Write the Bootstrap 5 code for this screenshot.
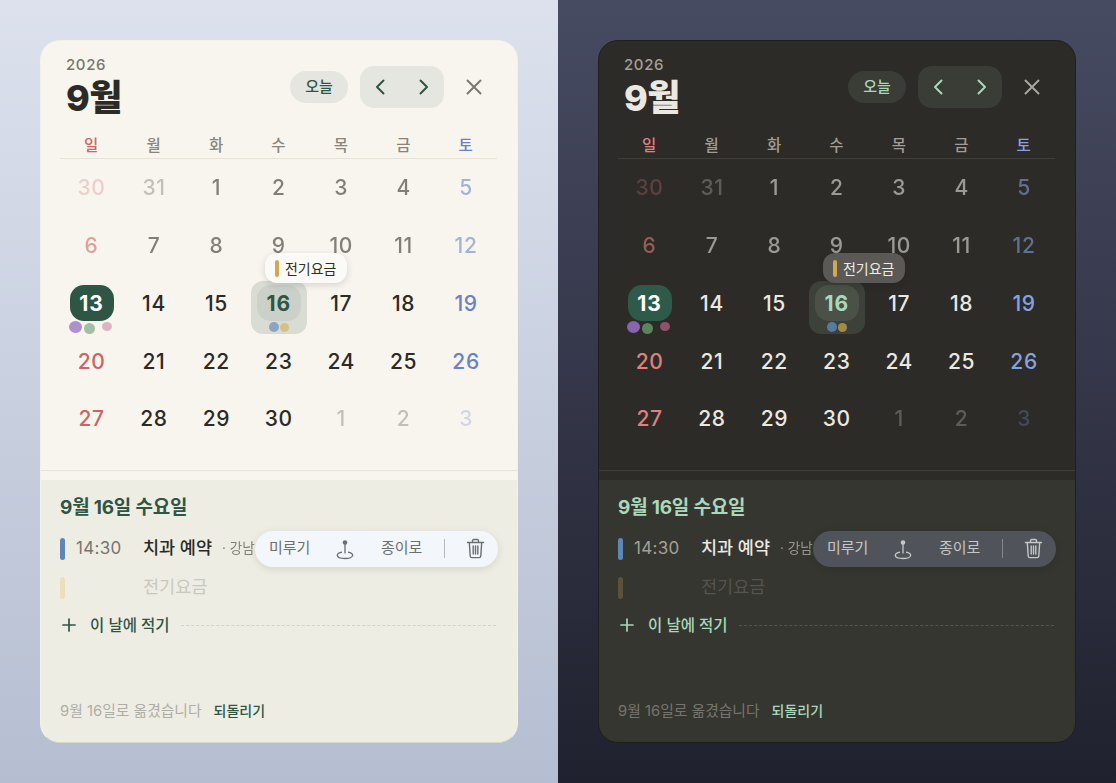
<!DOCTYPE html>
<html lang="ko"><head><meta charset="utf-8"><title>달력</title>
<link href="https://cdn.jsdelivr.net/npm/bootstrap@5.3.0/dist/css/bootstrap.min.css" rel="stylesheet">
<style>
html,body{height:783px;overflow:hidden;margin:0}
body{font-family:Inter,"Noto Sans CJK KR",sans-serif}
.stage{height:783px}
.pane{width:558px;height:783px;padding:40px;background:linear-gradient(180deg,var(--bg1),var(--bg2))}
.lt{--bg1:#dce1ed;--bg2:#b5bed1;--card:#f8f5ee;--low:#eeede4;--edge:#e6e2d8;--ink:#2b2a25;--acc:#2f5545;--mut:#77756c;--soft:#e5e6df;--sun:#cc6365;--sat:#6a80c8;--tip:#fbfaf6;--tipink:#2e2d28;--chip:#2f5545;--sel1:#d8dcd3;--sel2:#cbd1c8;--pill:#f3f6fa;--pilltx:#6c6f70;--ghost:#c9c8c0;--wd:#88857c;--foot:#aeaea6;--cx:#7a7870;--bar2:#ecdfbc;--dash:#d3d3c9;--rim:#f4f1e8;--rimb:#d9d6c6;--d1:#a98ccb;--d2:#9fbc9f;--d3:#deb0bf;--d4:#86a2c4;--d5:#d6bf80}
.dk{--bg1:#474b62;--bg2:#20212e;--card:#2c2b27;--low:#363630;--edge:#3f3e38;--ink:#ebe8e1;--acc:#a9d8ba;--mut:#a3a197;--soft:#3a3c36;--sun:#e0817e;--sat:#86a3e0;--tip:#5a5955;--tipink:#efece5;--chip:#2f5a4a;--sel1:#3c413a;--sel2:#4a5248;--pill:#50545a;--pilltx:#c5c7c7;--ghost:#55544e;--wd:#a09e95;--foot:#76756d;--cx:#a9a79e;--bar2:#5c5238;--dash:#55554d;--rim:#1f1f1d;--rimb:#1f1f1d;--d1:#8d69b7;--d2:#5d8a5f;--d3:#94566e;--d4:#587fa9;--d5:#a98f45}
.sheet{width:478px;height:703px;background:var(--card);border:1px solid var(--rim);border-bottom-color:var(--rimb);border-radius:20px;overflow:hidden;color:var(--ink)}
.head{flex:none;height:93px;padding:14px 33px 0 25px}
.yr{font-size:15px;line-height:20px;letter-spacing:.6px;color:var(--mut);font-weight:500}
.mo{font-size:36px;line-height:44px;font-weight:800;letter-spacing:-.5px;margin-top:1px}
.ctl{padding-top:11px}
.todaybtn{width:58px;height:32px;background:var(--soft);border:0;border-radius:16px;color:var(--acc);font-size:15px;font-weight:500;padding:0;margin-right:12px}
.navgrp{width:84px;height:42px;background:var(--soft);border-radius:14px;margin-right:20px;padding:0 14px}
.navgrp svg{width:12px;height:18px;color:var(--acc)}
.closeic{width:20px;height:20px;color:var(--cx)}
.wrap{flex:none;padding:0 20px 0 19px}
.wdrow{height:25px;border-bottom:1px solid var(--edge);font-size:15.500px;line-height:19px;padding-top:2px;color:var(--wd);font-weight:500;text-align:center}
.wk{height:57.8px}
.dcell{position:relative;display:flex;align-items:center;justify-content:center;height:57.8px;font-size:21px;font-weight:500;color:var(--ink);letter-spacing:.6px;padding-left:.6px}
.tsun{color:var(--sun)}.tsat{color:var(--sat)}
.tpast{opacity:.58}.tout{opacity:.26}
.chip{position:relative;z-index:1;width:44px;height:36px;border-radius:14px;display:flex;align-items:center;justify-content:center;font-weight:700;color:#fff;background:var(--chip);letter-spacing:1px}
.selbox{position:absolute;left:4px;top:6.400px;width:56px;height:53px;border-radius:12px;background:var(--sel1)}
.selin{position:relative;z-index:1;width:44px;height:36px;border-radius:14px;display:flex;align-items:center;justify-content:center;font-weight:700;color:var(--acc);background:var(--sel2);letter-spacing:1px}
.pt{position:absolute;border-radius:50%;z-index:2;filter:blur(.6px);opacity:.95}
.tip{position:absolute;z-index:3;left:17.700px;top:-21.600px;width:82px;height:30px;border-radius:12px;background:var(--tip);box-shadow:0 2px 7px rgba(0,0,0,.14);display:flex;align-items:center;gap:6px;padding-left:10px;font-size:14px;font-weight:400;color:var(--tipink);letter-spacing:0;white-space:nowrap}
.tip i{display:block;width:4px;height:17px;border-radius:2px;background:#cfa94f}
.rule{flex:none;height:1px;background:var(--edge);margin-top:22px}
.lower{flex:none;background:var(--low);margin-top:9px;height:262px;padding:16px 21px 0 19px;position:relative}
.dtitle{font-size:19px;line-height:24px;font-weight:700;color:var(--acc);letter-spacing:-.2px;margin-bottom:9.500px}
.evt{height:39px;position:relative;white-space:nowrap}
.ebar{width:5px;height:22px;border-radius:2.5px;flex:none}
.etime{width:67px;margin-left:11px;font-size:17px;color:var(--mut);letter-spacing:.3px;flex:none;margin-top:-1px}
.ename{font-size:17.500px;font-weight:500;margin-top:-1px}
.esub{font-size:13.500px;color:var(--mut);margin-left:10px;opacity:.9;margin-top:-1px}
.gh{color:var(--ghost);font-weight:400;margin-left:78px}
.act{position:absolute;z-index:3;left:195px;top:1.500px;width:243px;height:36px;border-radius:18px;background:var(--pill);box-shadow:0 2px 8px rgba(0,0,0,.1);color:var(--pilltx);font-size:15px}
.act span{position:absolute;top:7px;line-height:20px}
.act svg{position:absolute}
.act b{position:absolute;left:189px;top:8px;width:1px;height:19px;background:currentColor;opacity:.45}
.addrow{height:36px;color:var(--acc);font-size:15.500px;font-weight:500}
.addrow svg{width:14px;height:14px;margin-left:2px;margin-right:14px;flex:none}
.addline{flex:1;border-top:1px dashed var(--dash);margin-left:11px}
.foot{position:absolute;left:19px;bottom:21px;font-size:14.800px;line-height:20px;color:var(--foot)}
.foot a{color:var(--acc);margin-left:12px;text-decoration:none;font-weight:500;font-size:14px}
</style></head><body>
<div class="stage d-flex">

<div class="pane lt">
<div class="sheet d-flex flex-column">
 <div class="head d-flex justify-content-between align-items-start">
  <div><div class="yr">2026</div><div class="mo">9월</div></div>
  <div class="ctl d-flex align-items-center">
   <button class="todaybtn" type="button">오늘</button>
   <div class="navgrp d-flex align-items-center justify-content-between">
    <svg viewBox="0 0 12 18" fill="none" stroke="currentColor" stroke-width="2" stroke-linecap="round" stroke-linejoin="round"><path d="M9.500 2.500 3 9l6.500 6.500"/></svg>
    <svg viewBox="0 0 12 18" fill="none" stroke="currentColor" stroke-width="2" stroke-linecap="round" stroke-linejoin="round"><path d="M2.500 2.500 9 9l-6.500 6.500"/></svg>
   </div>
   <svg class="closeic" viewBox="0 0 20 20" fill="none" stroke="currentColor" stroke-width="2" stroke-linecap="round"><path d="m3.500 3.500 13 13M16.500 3.500l-13 13"/></svg>
  </div>
 </div>
 <div class="wrap">
  <div class="row g-0 wdrow"><div class="col tsun">일</div><div class="col">월</div><div class="col">화</div><div class="col">수</div><div class="col">목</div><div class="col">금</div><div class="col tsat">토</div></div>
  <div class="row g-0 wk"><div class="col dcell tsun tout">30</div><div class="col dcell tout">31</div><div class="col dcell tpast">1</div><div class="col dcell tpast">2</div><div class="col dcell tpast">3</div><div class="col dcell tpast">4</div><div class="col dcell tsat tpast">5</div></div>
  <div class="row g-0 wk"><div class="col dcell tsun tpast">6</div><div class="col dcell tpast">7</div><div class="col dcell tpast">8</div><div class="col dcell tpast">9</div><div class="col dcell tpast">10</div><div class="col dcell tpast">11</div><div class="col dcell tsat tpast">12</div></div>
  <div class="row g-0 wk"><div class="col dcell"><div class="chip">13</div><i class="pt" style="left:9px;top:46px;width:13px;height:12px;background:var(--d1)"></i><i class="pt" style="left:24px;top:48.400px;width:11px;height:11px;background:var(--d2)"></i><i class="pt" style="left:41.500px;top:47px;width:10px;height:9px;background:var(--d3)"></i></div><div class="col dcell">14</div><div class="col dcell">15</div><div class="col dcell"><div class="selbox"></div><div class="selin">16</div><i class="pt" style="left:21.700px;top:47.400px;width:10px;height:10px;background:var(--d4)"></i><i class="pt" style="left:32.700px;top:48.400px;width:9px;height:9px;background:var(--d5)"></i><div class="tip"><i></i>전기요금</div></div><div class="col dcell">17</div><div class="col dcell">18</div><div class="col dcell tsat">19</div></div>
  <div class="row g-0 wk"><div class="col dcell tsun">20</div><div class="col dcell">21</div><div class="col dcell">22</div><div class="col dcell">23</div><div class="col dcell">24</div><div class="col dcell">25</div><div class="col dcell tsat">26</div></div>
  <div class="row g-0 wk"><div class="col dcell tsun">27</div><div class="col dcell">28</div><div class="col dcell">29</div><div class="col dcell">30</div><div class="col dcell tout">1</div><div class="col dcell tout">2</div><div class="col dcell tsat tout">3</div></div>
 </div>
 <div class="rule"></div>
 <div class="lower">
  <div class="dtitle">9월 16일 수요일</div>
  <div class="evt d-flex align-items-center"><div class="ebar" style="background:#5f86b8"></div><div class="etime">14:30</div><div class="ename">치과 예약</div><div class="esub">· 강남</div>
   <div class="act"><span style="left:14px">미루기</span>
    <svg style="left:81px;top:8px" width="18" height="21" viewBox="0 0 18 21" fill="none" stroke="currentColor" stroke-width="1.300"><circle cx="9" cy="3.500" r="2.300" fill="currentColor" stroke="none"/><path d="M9 5v9.500"/><path d="M6 13.200c-2.800.5-4.700 1.700-4.700 3.100 0 1.800 3.400 3.200 7.700 3.200s7.700-1.400 7.700-3.200c0-1.400-1.900-2.600-4.700-3.100"/></svg>
    <span style="left:126px">종이로</span><b></b>
    <svg style="left:211px;top:7px" width="19" height="21" viewBox="0 0 19 21" fill="none" stroke="currentColor" stroke-width="1.400" stroke-linecap="round" stroke-linejoin="round"><path d="M1.500 4.500h16M6.500 4.500V2.800c0-.7.500-1.300 1.200-1.300h3.600c.7 0 1.200.6 1.200 1.300v1.700M3.300 4.500l.9 13.500c.1 1 .8 1.600 1.700 1.600h7.200c.9 0 1.600-.6 1.700-1.600l.9-13.500M7.200 8v8M9.500 8v8M11.800 8v8"/></svg>
   </div>
  </div>
  <div class="evt d-flex align-items-center"><div class="ebar" style="background:var(--bar2)"></div><div class="ename gh">전기요금</div></div>
  <div class="addrow d-flex align-items-center"><svg viewBox="0 0 14 14" fill="none" stroke="currentColor" stroke-width="1.700" stroke-linecap="round"><path d="M7 1v12M1 7h12"/></svg><span>이 날에 적기</span><div class="addline"></div></div>
  <div class="foot">9월 16일로 옮겼습니다<a href="#">되돌리기</a></div>
 </div>
</div>
</div>

<div class="pane dk">
<div class="sheet d-flex flex-column">
 <div class="head d-flex justify-content-between align-items-start">
  <div><div class="yr">2026</div><div class="mo">9월</div></div>
  <div class="ctl d-flex align-items-center">
   <button class="todaybtn" type="button">오늘</button>
   <div class="navgrp d-flex align-items-center justify-content-between">
    <svg viewBox="0 0 12 18" fill="none" stroke="currentColor" stroke-width="2" stroke-linecap="round" stroke-linejoin="round"><path d="M9.500 2.500 3 9l6.500 6.500"/></svg>
    <svg viewBox="0 0 12 18" fill="none" stroke="currentColor" stroke-width="2" stroke-linecap="round" stroke-linejoin="round"><path d="M2.500 2.500 9 9l-6.500 6.500"/></svg>
   </div>
   <svg class="closeic" viewBox="0 0 20 20" fill="none" stroke="currentColor" stroke-width="2" stroke-linecap="round"><path d="m3.500 3.500 13 13M16.500 3.500l-13 13"/></svg>
  </div>
 </div>
 <div class="wrap">
  <div class="row g-0 wdrow"><div class="col tsun">일</div><div class="col">월</div><div class="col">화</div><div class="col">수</div><div class="col">목</div><div class="col">금</div><div class="col tsat">토</div></div>
  <div class="row g-0 wk"><div class="col dcell tsun tout">30</div><div class="col dcell tout">31</div><div class="col dcell tpast">1</div><div class="col dcell tpast">2</div><div class="col dcell tpast">3</div><div class="col dcell tpast">4</div><div class="col dcell tsat tpast">5</div></div>
  <div class="row g-0 wk"><div class="col dcell tsun tpast">6</div><div class="col dcell tpast">7</div><div class="col dcell tpast">8</div><div class="col dcell tpast">9</div><div class="col dcell tpast">10</div><div class="col dcell tpast">11</div><div class="col dcell tsat tpast">12</div></div>
  <div class="row g-0 wk"><div class="col dcell"><div class="chip">13</div><i class="pt" style="left:9px;top:46px;width:13px;height:12px;background:var(--d1)"></i><i class="pt" style="left:24px;top:48.400px;width:11px;height:11px;background:var(--d2)"></i><i class="pt" style="left:41.500px;top:47px;width:10px;height:9px;background:var(--d3)"></i></div><div class="col dcell">14</div><div class="col dcell">15</div><div class="col dcell"><div class="selbox"></div><div class="selin">16</div><i class="pt" style="left:21.700px;top:47.400px;width:10px;height:10px;background:var(--d4)"></i><i class="pt" style="left:32.700px;top:48.400px;width:9px;height:9px;background:var(--d5)"></i><div class="tip"><i></i>전기요금</div></div><div class="col dcell">17</div><div class="col dcell">18</div><div class="col dcell tsat">19</div></div>
  <div class="row g-0 wk"><div class="col dcell tsun">20</div><div class="col dcell">21</div><div class="col dcell">22</div><div class="col dcell">23</div><div class="col dcell">24</div><div class="col dcell">25</div><div class="col dcell tsat">26</div></div>
  <div class="row g-0 wk"><div class="col dcell tsun">27</div><div class="col dcell">28</div><div class="col dcell">29</div><div class="col dcell">30</div><div class="col dcell tout">1</div><div class="col dcell tout">2</div><div class="col dcell tsat tout">3</div></div>
 </div>
 <div class="rule"></div>
 <div class="lower">
  <div class="dtitle">9월 16일 수요일</div>
  <div class="evt d-flex align-items-center"><div class="ebar" style="background:#5f86b8"></div><div class="etime">14:30</div><div class="ename">치과 예약</div><div class="esub">· 강남</div>
   <div class="act"><span style="left:14px">미루기</span>
    <svg style="left:81px;top:8px" width="18" height="21" viewBox="0 0 18 21" fill="none" stroke="currentColor" stroke-width="1.300"><circle cx="9" cy="3.500" r="2.300" fill="currentColor" stroke="none"/><path d="M9 5v9.500"/><path d="M6 13.200c-2.800.5-4.700 1.700-4.700 3.100 0 1.800 3.400 3.200 7.700 3.200s7.700-1.400 7.700-3.200c0-1.400-1.900-2.600-4.700-3.100"/></svg>
    <span style="left:126px">종이로</span><b></b>
    <svg style="left:211px;top:7px" width="19" height="21" viewBox="0 0 19 21" fill="none" stroke="currentColor" stroke-width="1.400" stroke-linecap="round" stroke-linejoin="round"><path d="M1.500 4.500h16M6.500 4.500V2.800c0-.7.500-1.300 1.200-1.300h3.600c.7 0 1.200.6 1.200 1.300v1.700M3.300 4.500l.9 13.500c.1 1 .8 1.600 1.700 1.600h7.200c.9 0 1.600-.6 1.700-1.600l.9-13.500M7.200 8v8M9.500 8v8M11.800 8v8"/></svg>
   </div>
  </div>
  <div class="evt d-flex align-items-center"><div class="ebar" style="background:var(--bar2)"></div><div class="ename gh">전기요금</div></div>
  <div class="addrow d-flex align-items-center"><svg viewBox="0 0 14 14" fill="none" stroke="currentColor" stroke-width="1.700" stroke-linecap="round"><path d="M7 1v12M1 7h12"/></svg><span>이 날에 적기</span><div class="addline"></div></div>
  <div class="foot">9월 16일로 옮겼습니다<a href="#">되돌리기</a></div>
 </div>
</div>
</div>

</div>
<script src="https://cdn.jsdelivr.net/npm/bootstrap@5.3.0/dist/js/bootstrap.bundle.min.js"></script>
</body></html>
